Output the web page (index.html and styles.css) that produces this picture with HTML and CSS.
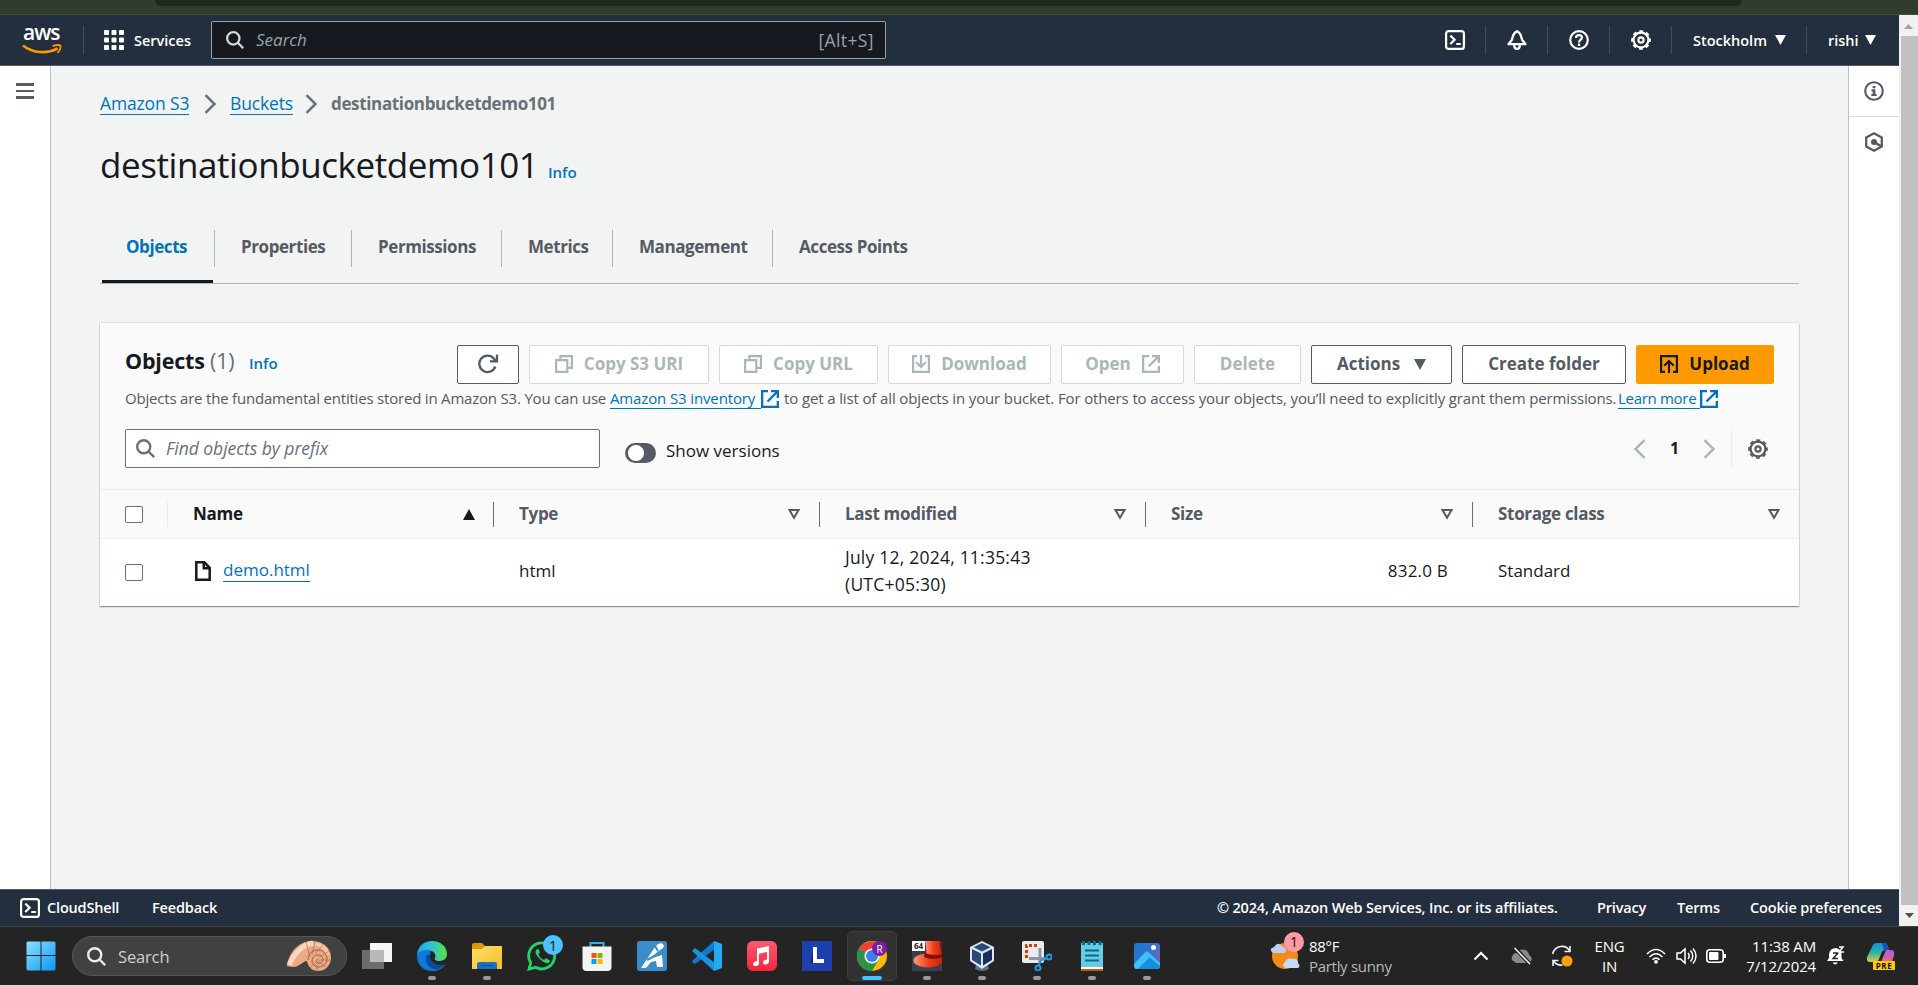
FILE: index.html
```html
<!DOCTYPE html>
<html lang="en">
<head>
<meta charset="utf-8">
<title>destinationbucketdemo101 - S3 bucket</title>
<link rel="stylesheet" href="styles.css">
</head>
<body>
<svg class="defs" width="0" height="0">
  <symbol id="i-search" viewBox="0 0 16 16"><g fill="none" stroke="currentColor" stroke-width="2"><circle cx="6.5" cy="6.5" r="5.5"/><path d="M10.5 10.5 15.3 15.3"/></g></symbol>
  <symbol id="i-shell" viewBox="0 0 20 20"><g fill="none" stroke="currentColor" stroke-width="2.2"><rect x="1.1" y="1.1" width="17.8" height="17.8" rx="2.5"/><path d="M5.3 5.6 9.6 9.8 5.3 14M11.2 14h4.6"/></g></symbol>
  <symbol id="i-bell" viewBox="0 0 20 20"><g fill="none" stroke="currentColor" stroke-width="2.3" stroke-linejoin="round"><path d="M1.500 14.200h17L15.200 10 14.100 6.300C13.500 3.600 12 2.200 10 1.200 8 2.200 6.500 3.600 5.900 6.300L4.800 10z"/><path d="M7.300 15v1c0 3.800 5.400 3.800 5.400 0v-1"/></g></symbol>
  <symbol id="i-help" viewBox="0 0 20 20"><g fill="none" stroke="currentColor" stroke-width="2.2"><circle cx="10" cy="10" r="8.8"/><path d="M7 8c0-3.8 6-3.8 6-.4 0 2-3 2-3 4.800M10 13.600v2.300"/></g></symbol>
  <symbol id="i-gear" viewBox="0 0 20 20"><g fill="none" stroke="currentColor"><circle cx="10" cy="10" r="7.400" stroke-width="2.200"/><circle cx="10" cy="10" r="8.900" stroke-width="1.900" stroke-dasharray="3.900 3.090" stroke-dashoffset="1.950"/><circle cx="10" cy="10" r="2.600" stroke-width="2.200"/></g></symbol>
  <symbol id="i-info" viewBox="0 0 20 20"><circle cx="10" cy="10" r="8.800" fill="none" stroke="currentColor" stroke-width="2.100"/><path fill="currentColor" d="M8.600 5h2.800v2.300H8.600zM7.400 8.300h4v4.800h1.300V15H7.300v-1.900h1.300v-2.900H7.400z"/></symbol>
  <symbol id="i-hex" viewBox="0 0 20 20"><path d="M10 1.300 17.800 5.600v8.800L10 18.700 2.200 14.400V5.600z" fill="none" stroke="currentColor" stroke-width="2.300" stroke-linejoin="round"/><circle cx="10" cy="10" r="3" fill="currentColor"/><path d="M10.500 10.300 16.800 14" stroke="currentColor" stroke-width="2.600"/></symbol>
  <symbol id="i-next" viewBox="0 0 12 20"><path d="M1.500 1.200 10.500 10 1.500 18.800" fill="none" stroke="currentColor" stroke-width="2.500"/></symbol>
  <symbol id="i-copy" viewBox="0 0 18 18"><g fill="none" stroke="currentColor" stroke-width="2.200"><path d="M1.100 5.200h11.200v11.700H1.100z"/><path d="M5.400 5V1.100h11.500v11.700h-4.400"/></g></symbol>
  <symbol id="i-down" viewBox="0 0 18 18"><g fill="none" stroke="currentColor" stroke-width="2.200"><path d="M5 1.100H1.100v15.800h15.800V1.100H13M9 0v11.500M4.200 7.200 9 12l4.800-4.800"/></g></symbol>
  <symbol id="i-up" viewBox="0 0 18 18"><g fill="none" stroke="currentColor" stroke-width="2.200"><path d="M5 16.900H1.100V1.100h15.800v15.800H13M9 18V6.300M4.200 10.800 9 6l4.800 4.800"/></g></symbol>
  <symbol id="i-ext" viewBox="0 0 18 18"><g fill="none" stroke="currentColor" stroke-width="2.300"><path d="M7 1.150H1.150v15.700h15.700V11M10 1.150h6.850V8M16.500 1.500 6.500 11.500"/></g></symbol>
  <symbol id="i-sort" viewBox="0 0 12 11"><path d="M1.500 1.100h9L6 8.800z" fill="none" stroke="currentColor" stroke-width="2"/></symbol>
  <symbol id="i-tri" viewBox="0 0 12 11"><path d="M0 0h12L6 11z" fill="currentColor"/></symbol>
</svg>

<div class="chrome"><div class="omnibox"></div></div>
<div class="browser">
  <div class="page">
    <header class="nav">
      <div class="aws"><span class="aws-word">aws</span>
        <svg width="40" height="13" viewBox="0 0 40 13"><path d="M1 1.500C11 9.500 25 10 35.500 4.500" fill="none" stroke="#f90" stroke-width="2.600"/><path d="M30.500 2.200C34 .8 37.500.8 38.300 1.700 38.800 3.500 37.500 6.800 35.500 9" fill="none" stroke="#f90" stroke-width="1.800"/></svg>
      </div>
      <i class="sep"></i>
      <svg class="apps" width="20" height="20" viewBox="0 0 20 20" fill="#fff"><rect width="5" height="5" rx="1"/><rect x="7.500" width="5" height="5" rx="1"/><rect x="15" width="5" height="5" rx="1"/><rect y="7.500" width="5" height="5" rx="1"/><rect x="7.500" y="7.500" width="5" height="5" rx="1"/><rect x="15" y="7.500" width="5" height="5" rx="1"/><rect y="15" width="5" height="5" rx="1"/><rect x="7.500" y="15" width="5" height="5" rx="1"/><rect x="15" y="15" width="5" height="5" rx="1"/></svg>
      <span class="nav-text">Services</span>
      <div class="nav-search"><svg width="18" height="18"><use href="#i-search"/></svg><em>Search</em><span>[Alt+S]</span></div>
      <div class="nav-right">
        <svg width="20" height="20"><use href="#i-shell"/></svg><i class="sep thin"></i>
        <svg width="20" height="20"><use href="#i-bell"/></svg><i class="sep thin"></i>
        <svg width="20" height="20"><use href="#i-help"/></svg><i class="sep thin"></i>
        <svg width="20" height="20"><use href="#i-gear"/></svg><i class="sep thin"></i>
        <span class="nav-text">Stockholm</span><svg width="11" height="10"><use href="#i-tri"/></svg><i class="sep thin"></i>
        <span class="nav-text rishi">rishi</span><svg width="11" height="10"><use href="#i-tri"/></svg>
      </div>
    </header>

    <div class="body">
      <aside class="left"><i></i><i></i><i></i></aside>
      <main>
        <nav class="crumbs">
          <a>Amazon S3</a><svg width="12" height="20"><use href="#i-next"/></svg>
          <a>Buckets</a><svg width="12" height="20"><use href="#i-next"/></svg>
          <b>destinationbucketdemo101</b>
        </nav>
        <div class="title"><h1>destinationbucketdemo101</h1><span class="info">Info</span></div>
        <div class="tabs">
          <div class="tab on"><span>Objects</span></div>
          <div class="tab"><span>Properties</span></div>
          <div class="tab"><span>Permissions</span></div>
          <div class="tab"><span>Metrics</span></div>
          <div class="tab"><span>Management</span></div>
          <div class="tab"><span>Access Points</span></div>
        </div>

        <section class="card">
          <div class="head">
            <div class="head-row">
              <h2>Objects <span>(1)</span></h2><span class="info">Info</span>
              <div class="buttons">
                <button class="btn"><svg width="22" height="20" viewBox="0 0 22 20"><path d="M18.300 12.500A8.200 8.200 0 1 1 16.800 4.500L19 7.200M20 .5V7.300H13" fill="none" stroke="currentColor" stroke-width="2.300"/></svg></button>
                <button class="btn off"><svg width="18" height="18"><use href="#i-copy"/></svg><span>Copy S3 URI</span></button>
                <button class="btn off"><svg width="18" height="18"><use href="#i-copy"/></svg><span>Copy URL</span></button>
                <button class="btn off"><svg width="18" height="18"><use href="#i-down"/></svg><span>Download</span></button>
                <button class="btn off"><span>Open</span><svg width="18" height="18"><use href="#i-ext"/></svg></button>
                <button class="btn off"><span>Delete</span></button>
                <button class="btn actions"><span>Actions</span><svg width="12" height="11"><use href="#i-tri"/></svg></button>
                <button class="btn"><span>Create folder</span></button>
                <button class="btn primary"><svg width="18" height="18"><use href="#i-up"/></svg><span>Upload</span></button>
              </div>
            </div>
            <div class="desc">
              <span class="d1">Objects are the fundamental entities stored in Amazon S3. You can use </span><a>Amazon S3 inventory</a><svg width="18" height="18"><use href="#i-ext"/></svg>
              <span>to get a list of all objects in your bucket. For others to access your objects, you’ll need to explicitly grant them permissions. </span><a class="learn">Learn more</a><svg width="18" height="18"><use href="#i-ext"/></svg>
            </div>
            <div class="filter">
              <div class="find"><svg width="19" height="19"><use href="#i-search"/></svg><em>Find objects by prefix</em></div>
              <i class="toggle"></i><span class="show">Show versions</span>
              <div class="pager"><svg class="flip" width="12" height="20"><use href="#i-next"/></svg><b>1</b><svg width="12" height="20"><use href="#i-next"/></svg><i></i><svg class="gear" width="20" height="20"><use href="#i-gear"/></svg></div>
            </div>
          </div>
          <div class="tr th">
            <div class="check"><i></i></div>
            <div class="cell name"><span>Name</span><svg class="flipv" width="12" height="11"><use href="#i-tri"/></svg></div>
            <div class="cell"><span>Type</span><svg width="12" height="11"><use href="#i-sort"/></svg></div>
            <div class="cell"><span>Last modified</span><svg width="12" height="11"><use href="#i-sort"/></svg></div>
            <div class="cell"><span>Size</span><svg width="12" height="11"><use href="#i-sort"/></svg></div>
            <div class="cell"><span>Storage class</span><svg width="12" height="11"><use href="#i-sort"/></svg></div>
          </div>
          <div class="tr td">
            <div class="check"><i></i></div>
            <div class="cell"><svg class="file" width="16" height="20" viewBox="0 0 16 20"><path d="M1.300 1.300h8L14.700 6.800v11.900H1.300zM8.800 1.300v6h6" fill="none" stroke="#16191f" stroke-width="2.500"/></svg><a>demo.html</a></div>
            <div class="cell">html</div>
            <div class="cell date">July 12, 2024, 11:35:43<br>(UTC+05:30)</div>
            <div class="cell size">832.0 B</div>
            <div class="cell">Standard</div>
          </div>
        </section>
      </main>
      <aside class="right"><div><svg width="20" height="20"><use href="#i-info"/></svg></div><div><svg width="20" height="20"><use href="#i-hex"/></svg></div></aside>
    </div>

    <footer class="foot">
      <svg width="20" height="20"><use href="#i-shell"/></svg><span>CloudShell</span><span>Feedback</span>
      <span>© 2024, Amazon Web Services, Inc. or its affiliates.</span><span>Privacy</span><span>Terms</span><span>Cookie preferences</span>
    </footer>
  </div>
  <div class="scroll"><svg width="19" height="21" viewBox="0 0 19 21"><path d="M5 14h9l-4.500-5z" fill="#a3a3a3"/></svg><div class="thumb"></div><svg width="19" height="21" viewBox="0 0 19 21"><path d="M6 8h9l-4.500 5z" fill="#505050"/></svg></div>
</div>

<div class="task">
  <svg class="win" width="30" height="30" viewBox="0 0 30 30"><defs><linearGradient id="gw" x1="0" y1="0" x2="1" y2="1"><stop offset="0" stop-color="#8be3ff"/><stop offset="1" stop-color="#0a96f5"/></linearGradient></defs><path fill="url(#gw)" d="M1.500.5H14.500V14H.5V1.500zM15.500.5H28.500l1 1V14H15.500zM.5 15H14.500V29.500H1.500l-1-1zM15.500 15h14v13.500l-1 1h-13z"/></svg>
  <div class="tsearch"><svg width="19" height="19"><use href="#i-search"/></svg><span>Search</span>
    <svg class="shell" width="46" height="32" viewBox="0 0 46 32"><path d="M1 26C3 12 13 1 26 1c11 0 19 7 19 16 0 8-5 14-13 14-6 0-10-4-11-10-4 0-8 6-13 6-4 0-7-1-7-1z" fill="#e9aa84"/><path d="M3 25C9 12 16 5 27 3" stroke="#fad9bf" stroke-width="5" fill="none"/><path d="M24 4q15-1 18 11" stroke="#f6c9a8" stroke-width="3" fill="none"/><path d="M20 2l4 15M29 2l-3 13M37 5l-8 9M43 11l-10 6M44 20l-11 0M40 27l-8-6M31 31v-8M24 28l6-6" stroke="#b8745a" stroke-width=".8"/><path d="M22 20c0-7 5-10 10-10 5 0 9 4 9 9s-4 8-8 8-7-3-7-6 2-6 6-6 5 3 5 5-3 4-5 3-2-3 0-4" fill="none" stroke="#9c5f45" stroke-width="1"/></svg>
  </div>
  <div class="apps-row">
    <div class="app"><svg width="30" height="30" viewBox="0 0 30 30"><path fill="#f4f4f4" d="M8 2h22v19H8z"/><path fill="#6c6c6c" d="M0 9h22v19H0z"/><path fill="#b9b9b9" d="M8 9h14v12H8z"/></svg></div>
    <div class="app run"><svg width="30" height="30" viewBox="0 0 30 30"><defs><linearGradient id="e1"><stop offset="0" stop-color="#22a6ee"/><stop offset=".5" stop-color="#2fc4cf"/><stop offset="1" stop-color="#5be33d"/></linearGradient></defs><path fill="#0b7ad8" d="M0 15c0 9 7 15 15 15 6 0 10-2 13-6-8 3-15-1-15-7 0-6 1-7 1-7C8 6 0 7 0 15z"/><path fill="url(#e1)" d="M0 14C1 5 7 0 15 0c9 0 15 6 15 13 0 5-4 7-8 7-3 0-5-1-4-3 2-4-2-8-8-8-5 0-9 2-10 5z"/><path fill="#11479b" d="M9 16c-1 8 5 13 12 12 4-1 6-3 7-5-7 3-15-1-15-9-2 0-4 0-4 2z"/></svg></div>
    <div class="app run"><svg width="30" height="30" viewBox="0 0 30 30"><path fill="#dd9a05" d="M0 4q0-2 2-2h8l3 3h15v6H0z"/><defs><linearGradient id="fo" x2="1" y2="1"><stop stop-color="#ffdf70"/><stop offset="1" stop-color="#f8bd21"/></linearGradient></defs><path fill="url(#fo)" d="M0 8h10l3-3h17v23H0z"/><path fill="#1273c0" d="M5 28v-5q0-2 2-2h16q2 0 2 2v5z"/><path d="M9 24.500h12" stroke="#0b4f8f"/></svg></div>
    <div class="app"><svg width="30" height="30" viewBox="0 0 30 30"><path d="M2 28l1.700-6.200A13 13 0 1 1 8.500 26.300z" fill="none" stroke="#25d366" stroke-width="2.800"/><path d="M10 8c-3 3-1 6 3 10s8 6 10 2c0-1-4-3-4.500-2.500L17 19c-3-1-5-4-5.500-6l1.300-1.500C12.500 9.500 11.500 7.500 10 8z" fill="#25d366"/></svg><span class="badge blue">1</span></div>
    <div class="app"><svg width="30" height="30" viewBox="0 0 30 30"><path d="M8.500 6V2h13v4" fill="none" stroke="#2bb1f0" stroke-width="2"/><path fill="#f3f3f3" d="M.5 5.500h29V26q0 4-4 4h-21q-4 0-4-4z"/><path fill="#f25022" d="M9.500 12h5v5h-5z"/><path fill="#7fba00" d="M15.500 12h5v5h-5z"/><path fill="#00a4ef" d="M9.500 18h5v5h-5z"/><path fill="#ffb900" d="M15.500 18h5v5h-5z"/></svg></div>
    <div class="app"><svg width="30" height="30" viewBox="0 0 30 30"><rect width="30" height="30" rx="3" fill="#3a8ccb"/><path fill="#fff" d="M4 27 18 6l3-3q5-2 6 2l-1 2-7 5-4 5 10-3 1 12h-6l-1-6-5 1-5 6z"/><path stroke="#3a8ccb" stroke-width="2" d="M10 19l15-8M18 5l3 5"/></svg></div>
    <div class="app"><svg width="30" height="30" viewBox="0 0 30 30"><path fill="#0a7ccc" d="M22 0 1 19l-1 2 3 2 20-15z"/><path fill="#1694e2" d="M22 30 0 10l3-3 20 15z"/><path fill="#25aaf2" d="m22 0 8 3v24l-8 3z"/></svg></div>
    <div class="app"><svg width="30" height="30" viewBox="0 0 30 30"><defs><linearGradient id="am" x2="0" y2="1"><stop stop-color="#fb5c74"/><stop offset="1" stop-color="#fa2339"/></linearGradient></defs><rect width="30" height="30" rx="6" fill="url(#am)"/><path fill="#fff" d="M10 7.500 22 5v15q0 3-3 3.500t-3-2 4-3V11l-8 1.700V22q0 3-3 3t-3-2 4-3z"/></svg></div>
    <div class="app"><svg width="30" height="30" viewBox="0 0 30 30"><rect width="30" height="30" fill="#1e3fae"/><path fill="#0e2d63" d="M11 10v12H8z"/><path fill="#fff" d="M11 6h4v12h7v4H11z"/></svg></div>
    <div class="app active"><svg width="30" height="30" viewBox="0 0 30 30"><circle cx="15" cy="15" r="15" fill="#fbbc05"/><path fill="#ea4335" d="M15 15 2 7.500C8-2 24-2 28.500 8H15z"/><path fill="#2b9348" d="M15 15 2 7.500C-4 18 4 30 15 30l6.500-11z"/><circle cx="15" cy="15" r="7.600" fill="#fff"/><circle cx="15" cy="15" r="6" fill="#3b82f0"/></svg><span class="badge user">R</span></div>
    <div class="app run"><svg width="30" height="30" viewBox="0 0 30 30"><defs><linearGradient id="rh" x2="1"><stop stop-color="#ff9a80"/><stop offset=".5" stop-color="#f0401c"/><stop offset="1" stop-color="#c9200b"/></linearGradient></defs><rect width="30" height="30" fill="#3a3f4c"/><path fill="#5b2522" d="M12 0h18v20H12z"/><path fill="url(#rh)" d="M13 0h15q-1 6 2 12v3q-8 3-16 0 1-6-1-15z"/><ellipse cx="16" cy="19.500" rx="14.500" ry="7" fill="url(#rh)"/><path d="M13 12q8 4 17 1v3q-9 4-18 0z" fill="#7d1307"/></svg><span class="tag64">64</span></div>
    <div class="app run"><svg width="30" height="30" viewBox="0 0 30 30"><path fill="#5c6f92" d="m9 24 6 3 6-3 1 4q-7 4-14 0z"/><path fill="#dde5f0" d="m15 0 12 6v14l-12 8-12-8V6z"/><path fill="#2c4a78" d="m15 2 8.500 4.200L15 10.500 6.500 6.200zM5 8l9 4.500v12L5 19z"/><path fill="#16305b" d="m25 8-9 4.500v12l9-5.500z"/></svg></div>
    <div class="app run"><svg width="30" height="30" viewBox="0 0 30 30"><rect width="22" height="22" rx="2" fill="#ececec"/><path d="M4.500 17V4.500H17" fill="none" stroke="#d83b01" stroke-width="3" stroke-dasharray="3 2"/><path d="M7 17.500h16M18 7v15" stroke="#8b98a3" stroke-width="3"/><g fill="none" stroke="#1e9ae8" stroke-width="2"><circle cx="27" cy="16" r="2.500"/><circle cx="16" cy="27" r="2.500"/><path d="M24 18l-5 1-2 5"/></g></svg></div>
    <div class="app run"><svg width="30" height="30" viewBox="0 0 30 30"><path fill="#b95c16" d="M4 27h22v3H4z"/><path fill="#fff" d="M4 26h22v2H4z"/><path fill="#66cce5" d="M4 2h22v24H4z"/><path d="M5 2h20" stroke="#0b6b86" stroke-width="4" stroke-dasharray="3 2.500"/><path d="M8 9.500h14M8 14.500h14M8 19.500h14" stroke="#0b6b86" stroke-width="2"/></svg></div>
    <div class="app run"><svg width="30" height="30" viewBox="0 0 30 30"><defs><linearGradient id="ph" x2="1" y2="1"><stop stop-color="#0b7bd8"/><stop offset=".6" stop-color="#4a6dc4"/><stop offset="1" stop-color="#a04fae"/></linearGradient></defs><rect x="2" y="2" width="26" height="26" rx="3" fill="url(#ph)"/><path fill="#38c4fa" d="M2 23 13 11.500q2-2 4 0L28 22v3q0 3-3 3H5q-3 0-3-3z"/><path fill="#178ce2" d="M6 28 17.500 16.500 28 25q0 3-3 3z"/><circle cx="21.500" cy="6.500" r="2.500" fill="#fff"/></svg></div>
  </div>
  <div class="weather"><svg width="32" height="30" viewBox="0 0 32 30"><circle cx="15" cy="15" r="13" fill="#f28a1c"/><path fill="#b9d0f4" d="M3 12q-5-4 1-6 4-6 8-1 6 2 3 7z"/><path fill="#c5dafa" d="M15 27q-4-3 0-6 2-5 8-3 5-1 5 4 3 3 0 5z"/></svg><span class="badge pink">1</span><div class="wx"><span>88°F</span><span class="dim">Partly sunny</span></div></div>
  <div class="tray">
    <svg width="16" height="10" viewBox="0 0 16 10"><path d="M1.500 8.500 8 2l6.500 6.500" fill="none" stroke="#fff" stroke-width="2"/></svg>
    <svg width="22" height="18" viewBox="0 0 22 18"><path fill="#8a8a8a" d="M4 15Q-1 13 1.500 9 2 6 6 6q4-6 10-2 2 2 2 4 4 2 2 6-1 2-4 2H5z"/><path d="M4 1l15 16" stroke="#242424" stroke-width="4"/><path d="M3.500 1 19 17" stroke="#f2f2f2" stroke-width="1.500"/></svg>
    <svg width="22" height="22" viewBox="0 0 22 22"><g fill="none" stroke="#f0f0f0" stroke-width="1.600"><path d="M1.500 9C4 0 15-1 18.500 6M19 1v5.500h-5.500M2 21v-5.500h5.500M2.500 16c2 3 5 4.500 9 4"/></g><circle cx="16" cy="16" r="5.500" fill="#ff9f0a"/></svg>
    <div class="lang">ENG<br>IN</div>
    <svg width="20" height="16" viewBox="0 0 20 16"><g fill="none" stroke="#fff" stroke-width="1.600"><path d="M1 6q9-9 18 0M3.500 9q6.500-6.500 13 0M6.500 11.800q3.500-3.500 7 0"/></g><circle cx="10" cy="13.800" r="1.900" fill="#fff"/></svg>
    <svg width="21" height="18" viewBox="0 0 21 18"><g fill="none" stroke="#fff" stroke-width="1.500"><path d="M1 6h3.500L9 2v14l-4.500-4H1zM12 6q2.500 3 0 6M14.500 3.500q4.500 5.500 0 11M17 1.500q6 7.500 0 15"/></g></svg>
    <svg width="20" height="14" viewBox="0 0 20 14"><rect x=".8" y=".8" width="16.400" height="12.400" rx="3" fill="none" stroke="#fff" stroke-width="1.600"/><rect x="3" y="3" width="9.500" height="8" rx="1" fill="#fff"/><path d="M19 5v4" stroke="#fff" stroke-width="2"/></svg>
    <div class="clock">11:38 AM<br>7/12/2024</div>
    <svg class="dnd" width="18" height="20" viewBox="0 0 18 20"><path fill="#fff" d="M0 15 2 12V8Q3 2 9 2q5 1 5.500 6v4l2 3zM5.500 16.500h5.500q-3 4-5.500 0z"/><path d="M6 7h5l-5 5.500h5" fill="none" stroke="#222" stroke-width="1.500"/><path d="M12 1h4l-4 5h5" fill="none" stroke="#fff" stroke-width="1.500"/></svg>
    <div class="copilot"><svg width="30" height="30" viewBox="0 0 30 30"><defs><linearGradient id="c1" x2="0" y2="1"><stop stop-color="#1b8de0"/><stop offset=".5" stop-color="#27b6a8"/><stop offset="1" stop-color="#e8c62c"/></linearGradient><linearGradient id="c2" x2="0" y2="1"><stop stop-color="#a95bea"/><stop offset="1" stop-color="#f1647c"/></linearGradient></defs><path fill="url(#c1)" d="M7 4q1-2 3-2h9q2 0 3 4l1 3h-3q-4 0-5 4l-2 5q-1 3-4 3H4q-4 0-3-5z"/><path fill="#1552b8" d="M16 2h3q2 0 3 4l1 3h-5z"/><path fill="url(#c2)" d="M20 9h5q4 0 3 5l-2 7H15z"/></svg><span>PRE</span></div>
  </div>
</div>
</body>
</html>
```
FILE: styles.css
```css
* { box-sizing: border-box; }
html { height: 985px; overflow: hidden; }
body { margin: 0; width: 1918px; height: 985px; overflow: hidden; display: flex; flex-direction: column; font-family: "Open Sans", "Noto Sans", sans-serif; font-size: 17px; color: #16191f; white-space: nowrap; }
svg { display: block; flex: none; }
.defs { position: absolute; }
h1, h2 { margin: 0; }
a { color: #0073bb; border-bottom: 1px solid #0073bb; }

.chrome { height: 15px; background: #303d2d; border-bottom: 1px solid #454b3c; padding: 0 176px 0 155px; flex: none; }
.omnibox { height: 6px; background: #1c2a1b; border-radius: 0 0 14px 14px; }
.browser { display: flex; height: 911px; flex: none; }
.page { width: 1899px; display: flex; flex-direction: column; }

.nav { height: 51px; background: #232f3e; border-bottom: 1px solid #545b64; display: flex; align-items: center; padding-left: 22px; color: #fff; flex: none; }
.aws { width: 61px; height: 32px; display: flex; flex-direction: column; margin-top: -6px; }
.aws-word { font-size: 21px; line-height: 23px; height: 23px; font-weight: 600; letter-spacing: -1px; padding-left: 1px; }
.sep { width: 1px; height: 28px; background: #414d5c; }
.apps { margin-left: 20px; }
.nav-text { font-size: 14.500px; font-weight: 600; margin-left: 10px; width: 77px; padding-top: 1px; }
.nav-search { width: 675px; height: 38px; border: 1px solid #95a5a6; border-radius: 2px; background: #16191f; display: flex; align-items: center; padding: 0 11px 1px 14px; color: #d5dbdb; }
.nav-search em { margin-left: 12px; color: #95a5a6; }
.nav-search span { margin-left: auto; color: #95a5a6; font-size: 17.500px; letter-spacing: .4px; }
.nav-right { margin-left: 559px; display: flex; align-items: center; }
.nav-right .thin { margin: 0 21px 0 20px; }
.nav-right .nav-text { margin-left: 0; width: 82px; }
.nav-right .nav-text.rishi { width: 37px; }

.body { flex: 1; display: flex; background: #f2f3f3; }
.left { width: 51px; background: #fff; border-right: 1px solid #b9c1c5; padding: 17px 0 0 16px; display: flex; flex-direction: column; gap: 4px; }
.left i { width: 18px; height: 2.500px; background: #545b64; }
.right { width: 51px; background: #fff; border-left: 1px solid #b9c1c5; }
.right div { height: 51px; display: flex; align-items: center; justify-content: center; color: #545b64; border-bottom: 1px solid #d5dbdb; }
.right div + div { border: 0; height: 50px; }
main { width: 1797px; padding: 0 49px; }

.crumbs { height: 38px; margin-top: 19px; display: grid; grid-template-columns: 104px 26px 75px 26px auto; align-items: center; color: #687078; font-size: 17.500px; }
.crumbs a { justify-self: start; line-height: 22px; margin-top: -1px; letter-spacing: -.15px; }
.crumbs b { font-size: 17px; letter-spacing: -.35px; margin-top: -1px; }
.title { height: 66px; display: flex; align-items: baseline; padding-top: 17px; }
.title h1 { font-size: 35px; line-height: 50px; font-weight: 400; letter-spacing: -.42px; width: 448px; }
.info { color: #0073bb; font-size: 15px; font-weight: 600; }
.tabs { margin-top: 23px; height: 72px; border-bottom: 1px solid #aab7b8; display: grid; grid-template-columns: 115px 137px 150px 111px 160px 200px; padding-top: 18px; align-items: start; }
.tab { height: 37px; line-height: 34px; padding-left: 26px; font-size: 17px; font-weight: 700; letter-spacing: -.42px; color: #545b64; border-right: 1px solid #aab7b8; }
.tab:last-child { border: 0; }
.tab.on { color: #0073bb; height: 53px; border: 0; background: linear-gradient(#16191f, #16191f) 2px 100% / 111px 3px no-repeat, linear-gradient(#aab7b8, #aab7b8) 100% 0 / 1px 37px no-repeat; }

.card { margin-top: 39px; height: 283px; width: 1699px; background: #fff; box-shadow: 0 0 1px #879596, 0 1px 1px #879596; }
.head { height: 166px; background: #fafafa; padding: 22px 25px 0; }
.head-row { display: flex; align-items: baseline; height: 40px; }
h2 { font-size: 21.500px; line-height: 32px; font-weight: 700; letter-spacing: -.2px; width: 124px; }
h2 span { font-weight: 400; color: #687078; }
.buttons { margin-left: auto; width: 1317px; height: 39px; align-self: flex-start; display: grid; grid-template-columns: 62px 180px 159px 163px 123px 107px 141px 164px 138px; gap: 10px; }
.btn { height: 39px; padding: 0 0 1px; border: 1px solid #545b64; border-radius: 2px; background: #fff; color: #545b64; font: inherit; font-size: 17px; font-weight: 700; display: flex; align-items: center; justify-content: center; gap: 11px; }
.btn span { margin-top: -1px; }
.btn.off { color: #aab7b8; border-color: #d5dbdb; }
.btn.actions { gap: 14px; }
.btn.primary { background: #f90; border-color: #f90; color: #16191f; }
.desc { height: 26px; padding-top: 1px; display: grid; grid-template-columns: 485px 151px 23px 834px 82px 20px; align-items: center; font-size: 15px; letter-spacing: -.13px; color: #545b64; line-height: 20px; }
.desc span { margin-top: -1px; }
.desc .d1 { letter-spacing: -.2px; }
.desc .learn { letter-spacing: -.3px; }
.desc svg { color: #0073bb; }
.filter { margin-top: 18px; display: flex; height: 39px; }
.find { width: 475px; height: 39px; border: 1px solid #687078; border-radius: 2px; background: #fff; display: flex; align-items: center; padding-left: 10px; color: #687078; }
.find em { margin-left: 11px; padding-bottom: 2px; font-size: 17.500px; letter-spacing: -.05px; }
.toggle { width: 31px; height: 20px; border-radius: 10px; background: radial-gradient(circle at 11px 10px, #fff 7.500px, #545b64 8.500px); margin: 14px 10px 0 25px; }
.show { line-height: 24px; margin-top: 10px; }
.pager { margin-left: auto; display: grid; grid-template-columns: 36px 33px 28px 17px 26px; align-items: center; color: #aab7b8; font-size: 16px; }
.pager b { color: #16191f; padding-bottom: 2px; }
.pager i { width: 1px; height: 38px; background: #eaeded; }
.gear { color: #545b64; }
.flip { transform: scaleX(-1); }
.flipv { transform: scaleY(-1); }

.tr { display: grid; grid-template-columns: 67px 326px 326px 326px 327px 327px; align-items: center; }
.th { height: 50px; background: #fafafa; border-top: 1px solid #eaeded; border-bottom: 1px solid #eaeded; font-size: 17px; font-weight: 700; letter-spacing: -.3px; color: #545b64; }
.check { padding-left: 25px; }
.check i { display: block; width: 18px; height: 17px; border: 1.500px solid #687078; border-radius: 2px; background: #fff; }
.cell { padding: 0 18px 0 26px; display: flex; align-items: center; }
.th .cell { border-left: 1px solid #687078; height: 25px; padding: 0 19px 0 25px; }
.th .cell span { margin-top: -1px; }
.th .cell.name { border-left-color: #eaeded; color: #16191f; padding-right: 18px; }
.th svg { margin-left: auto; }
.td { height: 67px; line-height: 27px; padding-bottom: 4px; }
.td a { line-height: 22px; }
.file { margin: 1px 12px 0 2px; }
.td .check i { margin-top: 3px; }
.date { display: block; font-size: 17.500px; letter-spacing: .22px; }
.size { justify-content: flex-end; padding-right: 24px; letter-spacing: .2px; }

.foot { height: 37px; background: #232f3e; border-top: 1px solid #545b64; display: grid; grid-template-columns: 27px 105px 1065px 380px 80px 73px 130px; align-items: center; padding-left: 20px; padding-bottom: 1px; color: #fff; font-size: 14.500px; font-weight: 600; letter-spacing: -.17px; flex: none; }
.scroll { width: 19px; background: #f1f1f1; display: flex; flex-direction: column; }
.thumb { flex: 1; margin-left: 2px; background: #c1c1c1; }

.task { height: 59px; background: #242424; border-top: 1px solid #45463a; display: flex; align-items: center; padding: 0 0 0 26px; color: #fff; }
.tsearch { width: 275px; height: 40px; margin-left: 16px; border-radius: 20px; background: #404141; border: 1px solid #565656; display: flex; align-items: center; padding-left: 14px; color: #ececec; }
.tsearch span { margin-left: 12px; width: 168px; font-size: 16.500px; letter-spacing: -.15px; color: #cfcfcf; }
.apps-row { display: flex; margin-left: 5px; }
.app { width: 50px; height: 50px; margin-right: 5px; display: flex; align-items: center; justify-content: center; position: relative; border-radius: 5px; }
.app.active { background: #323232; border: 1px solid #3d3d3d; }
.app.run::after, .app.active::after { content: ""; position: absolute; bottom: 1px; left: 21px; width: 8px; height: 4px; border-radius: 2px; background: #9a9a9a; }
.app.active::after { left: 14px; width: 20px; bottom: 0; background: #4cc2ff; }
.badge { position: absolute; width: 20px; height: 20px; border-radius: 50%; display: flex; align-items: center; justify-content: center; font-size: 14px; color: #151515; }
.badge.blue { background: #4cc2ff; left: 26px; top: 4px; }
.badge.user { background: #7b1fa2; color: #fff; width: 15px; height: 15px; font-size: 10px; left: 24px; top: 9px; }
.badge.pink { background: #ff99a4; left: 14px; top: -4px; }
.tag64 { position: absolute; left: 10px; top: 10px; width: 13px; height: 10px; background: #fff; text-align: center; font-size: 8px; line-height: 10px; font-weight: 700; color: #222; }
.weather { display: flex; align-items: center; margin-left: 93px; width: 203px; position: relative; gap: 7px; }
.wx { display: flex; flex-direction: column; font-size: 15px; letter-spacing: -.3px; line-height: 20px; padding-bottom: 1px; }
.dim { color: #b9b9b9; }
.tray { display: grid; grid-template-columns: 38px 40px 41px 54px 30px 30px 34px 76px 50px 31px; align-items: center; font-size: 15px; letter-spacing: -.15px; line-height: 20px; }
.lang { text-align: center; width: 35px; padding-bottom: 1px; }
.clock { text-align: right; padding-bottom: 1px; }
.dnd { margin-left: 11px; }
.copilot { position: relative; }
.copilot span { position: absolute; left: 7px; top: 20px; width: 22px; height: 9px; border-radius: 1px; background: #fc0; color: #111; font-size: 8px; line-height: 9px; font-weight: 700; text-align: center; letter-spacing: .5px; }
```
